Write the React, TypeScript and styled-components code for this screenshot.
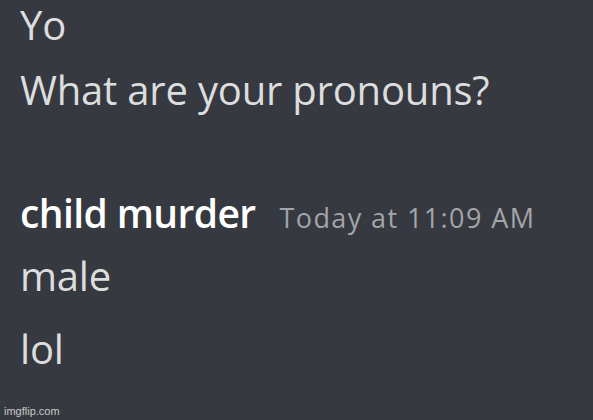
import React from "react";
import styled, { createGlobalStyle } from "styled-components";

const Global = createGlobalStyle`
  html, body { margin: 0; padding: 0; background: #36393f; }
  body { width: 593px; height: 420px; overflow: hidden; }
`;

const Page = styled.div`
  position: relative;
  width: 593px;
  height: 420px;
  background: #36393f;
  box-sizing: border-box;
  padding: 0.5px 0 0 20px;
  font-family: "Open Sans", "Noto Sans", sans-serif;
  display: flex;
  flex-direction: column;
`;

const Line = styled.div<{ $mt?: number }>`
  color: #dcddde;
  font-size: 40px;
  line-height: 48px;
  margin-top: ${(p) => p.$mt ?? 0}px;
  letter-spacing: -0.2px;
`;

const Header = styled.div<{ $mt?: number }>`
  display: flex;
  align-items: baseline;
  gap: 24px;
  height: 48px;
  margin-top: ${(p) => p.$mt ?? 0}px;
`;

const Name = styled.span`
  color: #ffffff;
  font-size: 39px;
  line-height: 48px;
  font-weight: 600;
  letter-spacing: -0.6px;
`;

const Stamp = styled.span`
  color: #a2a5a9;
  font-size: 27px;
  line-height: 36px;
  letter-spacing: 1.4px;
`;

const Watermark = styled.div`
  position: absolute;
  left: 4px;
  bottom: 2px;
  color: #c9cacc;
  font-family: "Liberation Sans", Arial, sans-serif;
  font-size: 11px;
  line-height: 14px;
`;

export default function App() {
  return (
    <>
      <Global />
      <Page>
        <Line>Yo</Line>
        <Line $mt={17}>What are your pronouns?</Line>
        <Header $mt={75.35}>
          <Name>child murder</Name>
          <Stamp>Today at 11:09 AM</Stamp>
        </Header>
        <Line $mt={15.65}>male</Line>
        <Line $mt={25}>lol</Line>
        <Watermark>imgflip.com</Watermark>
      </Page>
    </>
  );
}
